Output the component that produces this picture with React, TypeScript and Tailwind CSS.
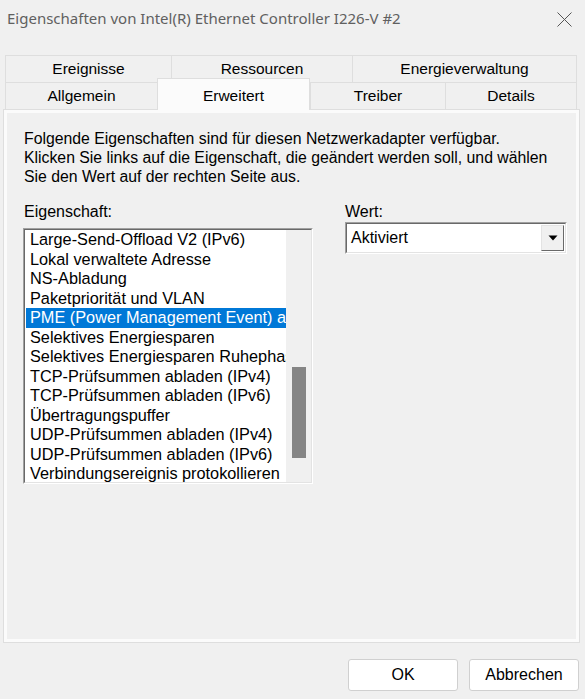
import React from "react";

const items = [
  "Large-Send-Offload V2 (IPv6)",
  "Lokal verwaltete Adresse",
  "NS-Abladung",
  "Paketpriorität und VLAN",
  "PME (Power Management Event) aktivieren",
  "Selektives Energiesparen",
  "Selektives Energiesparen Ruhephase",
  "TCP-Prüfsummen abladen (IPv4)",
  "TCP-Prüfsummen abladen (IPv6)",
  "Übertragungspuffer",
  "UDP-Prüfsummen abladen (IPv4)",
  "UDP-Prüfsummen abladen (IPv6)",
  "Verbindungsereignis protokollieren",
];

function Tab({ label, w, last }: { label: string; w: string; last?: boolean }) {
  return (
    <div
      className={`${w} h-full flex items-center justify-center border-t border-l border-[#dedede] bg-[#f0f0f0] ${
        last ? "border-r" : ""
      }`}
    >
      {label}
    </div>
  );
}

export default function App() {
  return (
    <div
      className="w-[585px] h-[699px] bg-[#f0f0f0] flex flex-col overflow-hidden text-[16px] text-black"
      style={{ fontFamily: '"Liberation Sans", Arial, sans-serif' }}
    >
      {/* Title bar */}
      <div className="h-[36px] flex items-center justify-between pl-[7px] pr-[13px] shrink-0">
        <span
          className="text-[15px] text-[#606060]"
          style={{ fontFamily: '"Noto Sans", "Open Sans", sans-serif' }}
        >
          Eigenschaften von Intel(R) Ethernet Controller I226-V #2
        </span>
        <svg width="15" height="15" viewBox="0 0 15 15" className="mt-[2px]">
          <path d="M0.5 0.5 L14.5 14.5 M14.5 0.5 L0.5 14.5" stroke="#555" strokeWidth="1" fill="none" />
        </svg>
      </div>

      {/* Tabs */}
      <div className="mt-[19px] ml-[5px] flex flex-col shrink-0 text-[15.5px]">
        <div className="flex h-[27px]">
          <Tab label="Ereignisse" w="w-[166px]" />
          <Tab label="Ressourcen" w="w-[181px]" />
          <Tab label="Energieverwaltung" w="w-[225px]" last />
        </div>
        <div className="flex h-[27px] items-start">
          <Tab label="Allgemein" w="w-[152px]" />
          <div className="relative z-10 w-[153px] h-[32px] -mt-[4px] bg-[#fbfbfb] border-t border-l border-r border-[#dedede] flex justify-center pt-[5px]">
            Erweitert
          </div>
          <Tab label="Treiber" w="w-[135px]" />
          <Tab label="Details" w="w-[132px]" last />
        </div>
      </div>

      {/* Panel */}
      <div className="ml-[3px] w-[577px] h-[534px] border border-[#dedede] bg-[#fbfbfb] p-[3px] shrink-0">
        <div className="w-full h-full bg-[#f0f0f0] pl-[17px] pt-[16px] flex flex-col">
          <div className="leading-[19px] text-[15.8px]">
            Folgende Eigenschaften sind für diesen Netzwerkadapter verfügbar.
            <br />
            Klicken Sie links auf die Eigenschaft, die geändert werden soll, und wählen
            <br />
            Sie den Wert auf der rechten Seite aus.
          </div>

          <div className="flex mt-[16px]">
            {/* Left column */}
            <div className="flex flex-col -ml-[1px]">
              <div className="leading-[19px] pl-[1px]">Eigenschaft:</div>
              <div className="mt-[7px] w-[290px] h-[256px] border-t border-l border-[#a0a0a0] border-b border-r border-b-white border-r-white">
                <div className="w-full h-full border-t border-l border-[#696969] border-b border-r border-b-[#e3e3e3] border-r-[#e3e3e3] bg-white flex">
                  <div className="w-[261px] h-full overflow-hidden pl-[1px] text-[16.3px]">
                    {items.map((it, i) => (
                      <div
                        key={it}
                        className={`h-[19.5px] leading-[19.5px] pl-[4px] whitespace-nowrap overflow-hidden ${
                          i === 4 ? "bg-[#0078d7] text-white" : ""
                        }`}
                      >
                        {it}
                      </div>
                    ))}
                  </div>
                  <div className="flex-1 h-full bg-[#f0f0f0] pt-[137px] flex justify-center">
                    <div className="w-[14px] h-[91px] bg-[#858585]" />
                  </div>
                </div>
              </div>
            </div>

            {/* Right column */}
            <div className="flex flex-col ml-[32px]">
              <div className="leading-[19px]">Wert:</div>
              <div className="mt-[1px] w-[222px] h-[32px] border-t border-l border-[#a0a0a0] border-b border-r border-b-white border-r-white">
                <div className="w-full h-full border-t border-l border-[#696969] border-b border-r border-b-[#e3e3e3] border-r-[#e3e3e3] bg-white flex items-center justify-between pl-[4px] pr-[1px]">
                  <span>Aktiviert</span>
                  <div className="w-[23px] h-[26px] border-t border-l border-[#e3e3e3] border-b border-r border-b-[#696969] border-r-[#696969] bg-[#f0f0f0] flex items-center justify-center">
                    <svg width="10" height="6" viewBox="0 0 10 6">
                      <path d="M0.5 0.5 L9.5 0.5 L5 5.5 Z" fill="#000" />
                    </svg>
                  </div>
                </div>
              </div>
            </div>
          </div>
        </div>
      </div>

      {/* Buttons */}
      <div className="flex justify-end gap-[11px] pr-[6px] mt-[16px]">
        <button className="w-[110px] h-[32px] bg-white border border-[#d0d0d0] rounded-[3px]">OK</button>
        <button className="w-[110px] h-[32px] bg-white border border-[#d0d0d0] rounded-[3px]">Abbrechen</button>
      </div>
    </div>
  );
}
